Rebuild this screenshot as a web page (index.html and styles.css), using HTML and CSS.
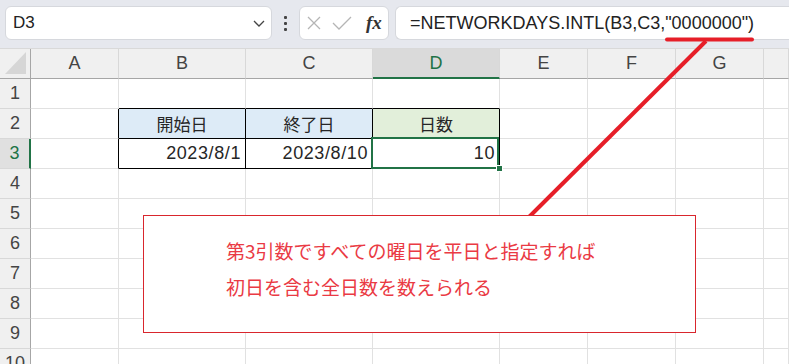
FILE: index.html
```html
<!DOCTYPE html>
<html lang="ja">
<head>
<meta charset="UTF-8">
<title>NETWORKDAYS.INTL</title>
<link rel="stylesheet" href="styles.css">
</head>
<body>
<div class="app">

  <!-- 数式バー -->
  <div class="topbar">
    <div class="namebox">
      <span>D3</span>
      <svg class="chev" width="12" height="7" viewBox="0 0 12 7"><path d="M1 1l5 5 5-5" fill="none" stroke="#444" stroke-width="1.3"/></svg>
    </div>
    <div class="kebab"><i></i><i></i><i></i></div>
    <div class="fxbox">
      <svg width="14" height="14" viewBox="0 0 14 14"><path d="M1 1l12 12M13 1L1 13" stroke="#b5b5b5" stroke-width="1.3"/></svg>
      <svg width="20" height="14" viewBox="0 0 20 14"><path d="M1 7l6 6L19 1" fill="none" stroke="#b5b5b5" stroke-width="1.3"/></svg>
      <span class="fx">fx</span>
    </div>
    <div class="formula">=NETWORKDAYS.INTL(B3,C3,"0000000")</div>
  </div>

  <!-- シート -->
  <div class="sheet">
    <div class="hd corner"><svg width="22" height="23" viewBox="0 0 22 23"><path d="M0 22H21V0z" fill="#d6d6d6"/></svg></div>
    <div class="hd">A</div>
    <div class="hd">B</div>
    <div class="hd">C</div>
    <div class="hd sel">D</div>
    <div class="hd">E</div>
    <div class="hd">F</div>
    <div class="hd">G</div>
    <div class="hd"></div>

    <div class="rh">1</div>
    <div class="c"></div><div class="c bb"></div><div class="c bb"></div><div class="c bb"></div><div class="c"></div><div class="c"></div><div class="c"></div><div class="c"></div>

    <div class="rh">2</div>
    <div class="c rb"></div>
    <div class="c tb blue ctr">開始日</div>
    <div class="c tb blue ctr">終了日</div>
    <div class="c tb green ctr">日数</div>
    <div class="c"></div><div class="c"></div><div class="c"></div><div class="c"></div>

    <div class="rh rsel">3</div>
    <div class="c rb"></div>
    <div class="c tb num">2023/8/1</div>
    <div class="c tb num">2023/8/10</div>
    <div class="c tb num active">10<span class="handle"></span></div>
    <div class="c"></div><div class="c"></div><div class="c"></div><div class="c"></div>

    <div class="rh">4</div>
    <div class="c"></div><div class="c"></div><div class="c"></div><div class="c"></div><div class="c"></div><div class="c"></div><div class="c"></div><div class="c"></div>
    <div class="rh">5</div>
    <div class="c"></div><div class="c"></div><div class="c"></div><div class="c"></div><div class="c"></div><div class="c"></div><div class="c"></div><div class="c"></div>
    <div class="rh">6</div>
    <div class="c"></div><div class="c"></div><div class="c"></div><div class="c"></div><div class="c"></div><div class="c"></div><div class="c"></div><div class="c"></div>
    <div class="rh">7</div>
    <div class="c"></div><div class="c"></div><div class="c"></div><div class="c"></div><div class="c"></div><div class="c"></div><div class="c"></div><div class="c"></div>
    <div class="rh">8</div>
    <div class="c"></div><div class="c"></div><div class="c"></div><div class="c"></div><div class="c"></div><div class="c"></div><div class="c"></div><div class="c"></div>
    <div class="rh">9</div>
    <div class="c"></div><div class="c"></div><div class="c"></div><div class="c"></div><div class="c"></div><div class="c"></div><div class="c"></div><div class="c"></div>
    <div class="rh">10</div>
    <div class="c"></div><div class="c"></div><div class="c"></div><div class="c"></div><div class="c"></div><div class="c"></div><div class="c"></div><div class="c"></div>
  </div>

  <!-- 吹き出し -->
  <svg class="callout" width="789" height="364" viewBox="0 0 789 364">
    <path d="M667 39.5H752" stroke="#e61e28" stroke-width="4" stroke-linecap="round"/>
    <path d="M706 41L529 217" stroke="#e61e28" stroke-width="4"/>
  </svg>
  <div class="note">
    第3引数ですべての曜日を平日と指定すれば<br>
    初日を含む全日数を数えられる
  </div>

</div>
</body>
</html>
```

FILE: styles.css
```css
* { box-sizing: border-box; }
body { margin: 0; background: #fff; font-family: "Liberation Sans", "Noto Sans CJK JP", sans-serif; color: #262626; }
.app { position: relative; width: 789px; height: 364px; overflow: hidden; }

.topbar { height: 49px; background: #e6e8ee; border-bottom: 1px solid #d9d9d9; display: flex; align-items: flex-start; padding: 6px 0 0 5px; }
.namebox { width: 267px; height: 34px; background: #fff; border: 1px solid #d6d8dd; border-radius: 6px; display: flex; align-items: center; justify-content: space-between; padding: 0 6px 0 7px; font-size: 17px; color: #222; }
.chev { margin-top: 1px; }
.kebab { width: 27px; height: 34px; display: flex; flex-direction: column; align-items: center; justify-content: center; gap: 3px; }
.kebab i { width: 3px; height: 3px; background: #444; border-radius: 1px; }
.fxbox { width: 90px; height: 34px; background: #fff; border: 1px solid #d6d8dd; border-radius: 6px; display: flex; align-items: center; padding: 0 0 0 7px; gap: 12px; }
.fxbox svg:nth-child(2) { margin-left: -1px; }
.fx { font-family: "Liberation Serif", serif; font-style: italic; font-weight: bold; font-size: 19px; color: #333; margin-left: 2px; }
.formula { flex: 1; height: 34px; margin-left: 6px; background: #fff; border: 1px solid #d6d8dd; border-right: none; border-radius: 6px 0 0 6px; padding: 0 0 0 14px; display: flex; align-items: center; font-size: 18px; color: #222; }

.sheet { display: grid; grid-template-columns: 31px 88px 127px 127px 127px 88px 88px 88px 1fr; grid-auto-rows: 30px; }
.hd { background: #f0f0f0; border-right: 1px solid #d8d8d8; border-bottom: 1px solid #a6a6a6; display: flex; align-items: center; justify-content: center; font-size: 18px; color: #444; }
.hd.corner { border-right-color: #a6a6a6; align-items: flex-end; justify-content: flex-end; padding: 0 3px 3px 0; }
.hd.sel { background: #dadada; color: #217346; border-bottom: 2px solid #217346; }
.rh { background: #f0f0f0; border-right: 1px solid #a6a6a6; border-bottom: 1px solid #d8d8d8; display: flex; align-items: center; justify-content: center; font-size: 18px; color: #444; }
.rh.rsel { background: #e0e0e0; color: #217346; border-right: 2px solid #217346; }
.c { border-right: 1px solid #e1e1e1; border-bottom: 1px solid #e1e1e1; font-size: 18px; display: flex; align-items: center; position: relative; }
.c.bb { border-bottom-color: #000; }
.c.rb { border-right-color: #000; }
.c.tb { border-color: #000; }
.blue { background: #ddebf7; }
.green { background: #e2efda; }
.ctr { justify-content: center; font-size: 17px; }
.num { justify-content: flex-end; padding-right: 4px; letter-spacing: 0.6px; }
.active::after { content: ""; position: absolute; top: -2px; left: -2px; right: 0; bottom: -1px; border: 2px solid #217346; }
.handle { position: absolute; right: -4px; bottom: -4px; width: 7px; height: 7px; background: #217346; border: 1px solid #fff; z-index: 2; }

.callout { position: absolute; left: 0; top: 0; }
.note { position: absolute; left: 143px; top: 215px; width: 553px; height: 118px; background: #fff; border: 1px solid #d9262d; padding: 17px 0 0 82px; font-family: "Noto Sans CJK JP", sans-serif; font-size: 19px; line-height: 36px; color: #ea3a44; }
```
